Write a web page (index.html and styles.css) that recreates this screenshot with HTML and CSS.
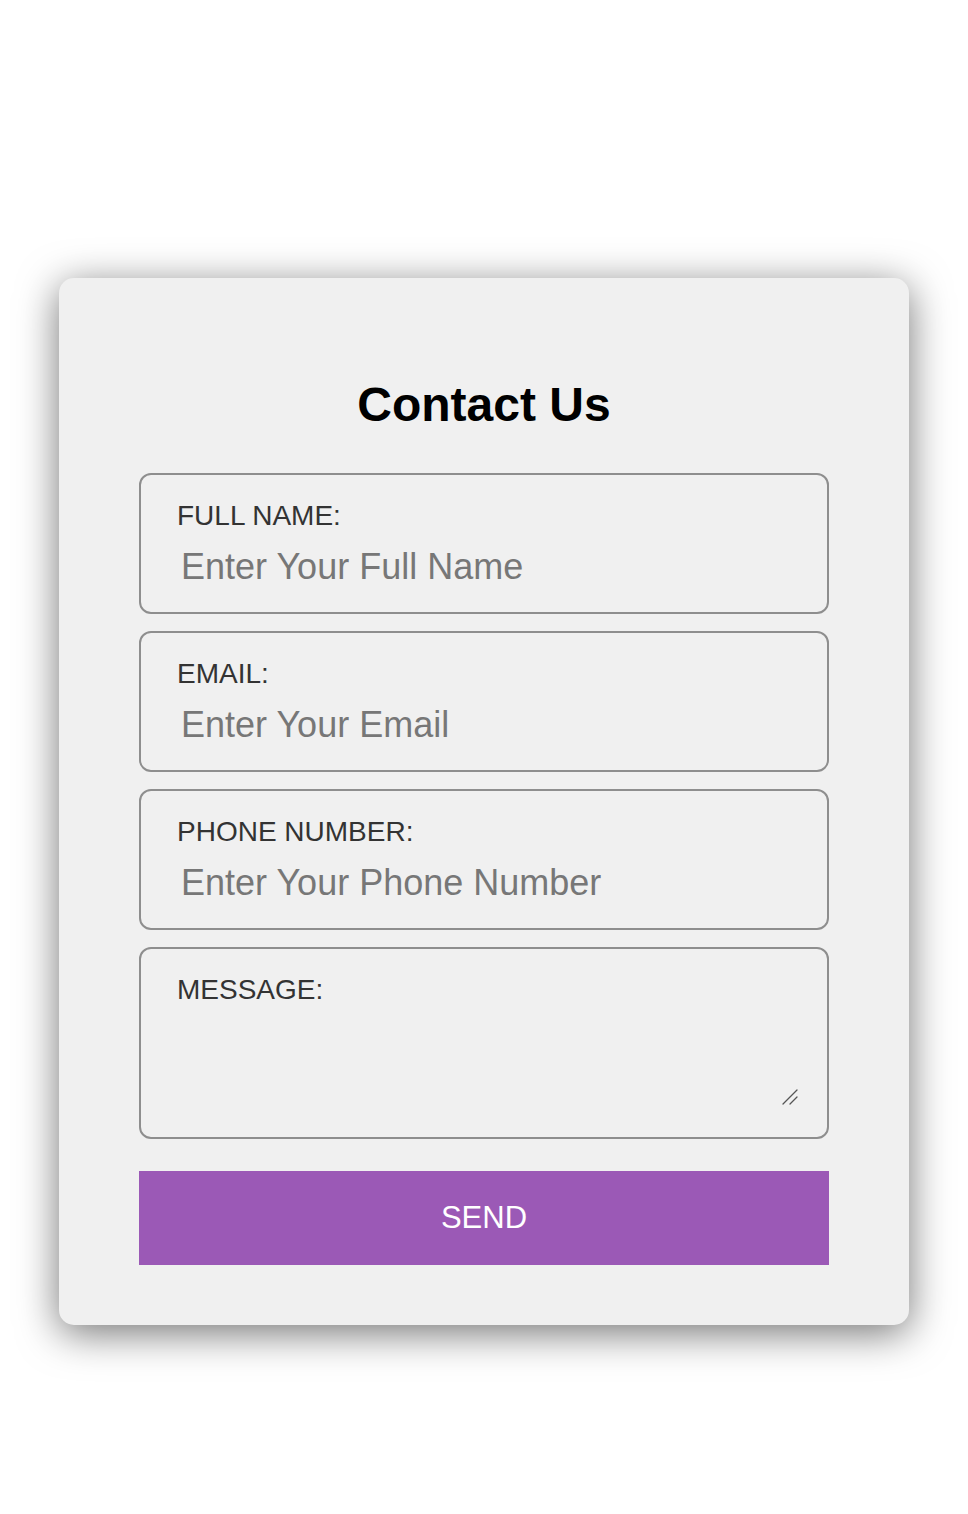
FILE: index.html
```html
<!DOCTYPE html>
<html lang="en">
<head>
<meta charset="utf-8">
<title>Contact Us</title>
<link rel="stylesheet" href="styles.css">
</head>
<body>
  <div class="card">
    <h1 class="title">Contact Us</h1>
    <form class="form">
      <div class="field">
        <label class="label" for="name">FULL NAME:</label>
        <input class="input" id="name" type="text" placeholder="Enter Your Full Name">
      </div>
      <div class="field">
        <label class="label" for="email">EMAIL:</label>
        <input class="input" id="email" type="email" placeholder="Enter Your Email">
      </div>
      <div class="field">
        <label class="label" for="phone">PHONE NUMBER:</label>
        <input class="input" id="phone" type="tel" placeholder="Enter Your Phone Number">
      </div>
      <div class="field field-message">
        <label class="label" for="message">MESSAGE:</label>
        <textarea class="textarea" id="message"></textarea>
        <svg class="grip" width="16" height="16" viewBox="0 0 16 16" aria-hidden="true">
          <path d="M1 15 L15 1 M8 15 L15 8" stroke="#555" stroke-width="1.3" fill="none" stroke-linecap="round"/>
        </svg>
      </div>
      <button class="send" type="button">SEND</button>
    </form>
  </div>
</body>
</html>
```
FILE: styles.css
```css
* { box-sizing: border-box; }
html, body {
  margin: 0;
  padding: 0;
  background: #ffffff;
  font-family: "Liberation Sans", Arial, Helvetica, sans-serif;
}
body {
  padding-top: 278px;
  padding-bottom: 189px;
}
.card {
  width: 850px;
  margin: 0 auto;
  background: #f0f0f0;
  border-radius: 15px;
  box-shadow: 0 8px 40px rgba(0, 0, 0, 0.55);
  padding: 99px 80px 60px;
}
.title {
  margin: 0 0 41px;
  font-size: 48px;
  line-height: 55px;
  font-weight: 700;
  text-align: center;
  color: #000;
}
.form {
  display: flex;
  flex-direction: column;
  gap: 17px;
}
.field {
  position: relative;
  height: 141px;
  border: 2px solid #8e8e8e;
  border-radius: 12px;
  padding: 25px 30px 0 36px;
  display: flex;
  flex-direction: column;
}
.field-message {
  height: 192px;
}
.label {
  display: block;
  font-size: 28px;
  line-height: 32px;
  color: #333;
}
.input {
  display: block;
  margin-top: 14px;
  height: 41px;
  padding: 0 4px;
  border: none;
  outline: none;
  background: transparent;
  font-family: "Liberation Sans", Arial, Helvetica, sans-serif;
  font-size: 36px;
  color: #333;
  width: 100%;
}
.input::placeholder {
  color: #777;
}
.textarea {
  display: block;
  margin-top: 8px;
  width: 100%;
  height: 96px;
  border: none;
  outline: none;
  resize: none;
  background: transparent;
  font-family: "Liberation Sans", Arial, Helvetica, sans-serif;
  font-size: 28px;
  padding: 0 4px;
}
.grip {
  position: absolute;
  right: 29px;
  bottom: 32px;
  width: 16px;
  height: 16px;
}
.send {
  margin-top: 15px;
  height: 94px;
  width: 100%;
  border: none;
  border-radius: 0;
  background: #9b59b6;
  color: #fff;
  font-family: "Liberation Sans", Arial, Helvetica, sans-serif;
  font-size: 31px;
  cursor: pointer;
}
```
